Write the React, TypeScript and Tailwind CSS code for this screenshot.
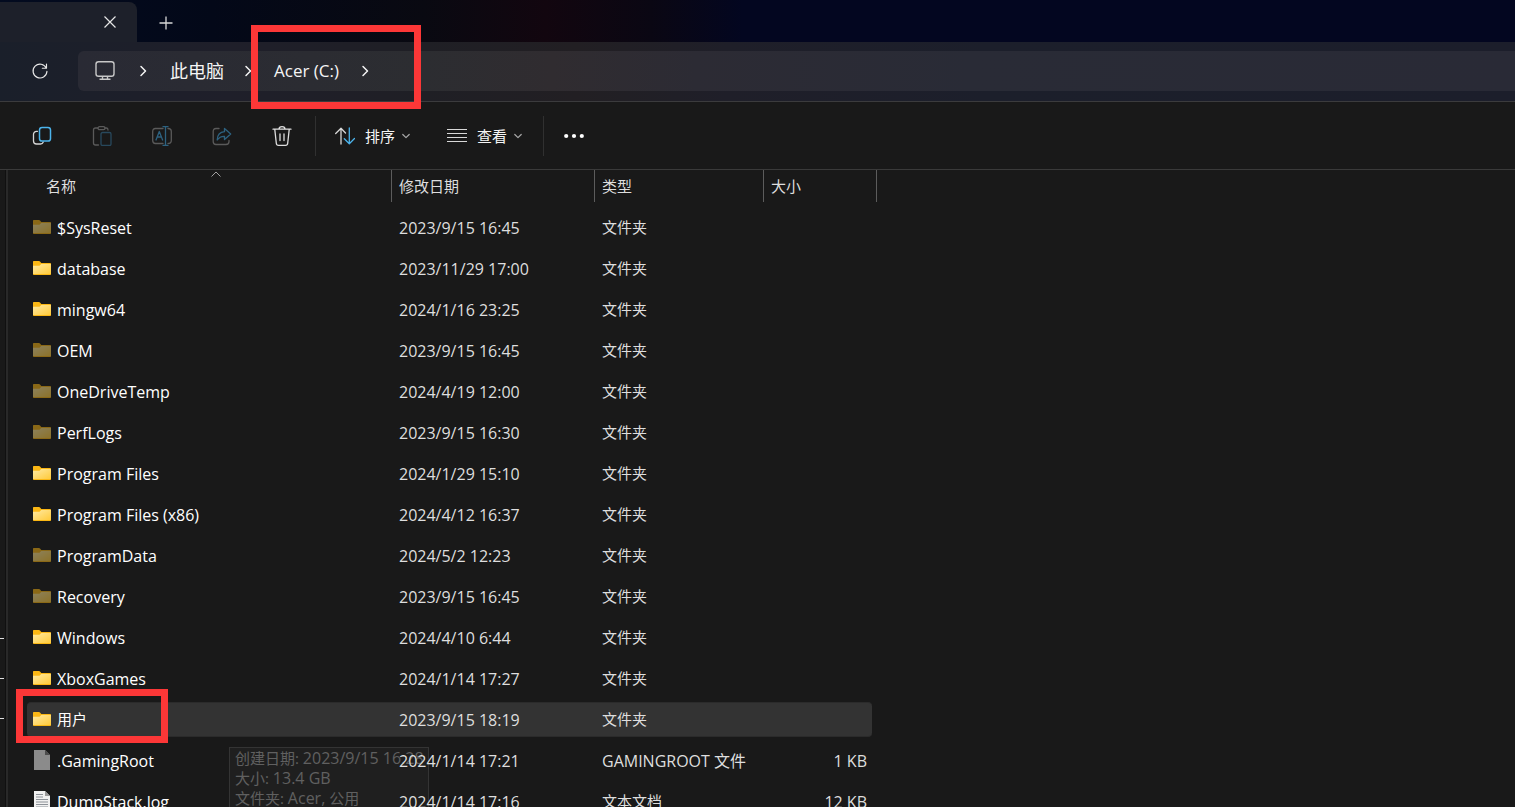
import type { ReactNode } from "react";

type Kind = "folder" | "hidden" | "file" | "text";

const entries: { name: string; date: string; type: string; size?: string; kind: Kind }[] = [
  { name: "$SysReset", date: "2023/9/15 16:45", type: "文件夹", kind: "hidden" },
  { name: "database", date: "2023/11/29 17:00", type: "文件夹", kind: "folder" },
  { name: "mingw64", date: "2024/1/16 23:25", type: "文件夹", kind: "folder" },
  { name: "OEM", date: "2023/9/15 16:45", type: "文件夹", kind: "hidden" },
  { name: "OneDriveTemp", date: "2024/4/19 12:00", type: "文件夹", kind: "hidden" },
  { name: "PerfLogs", date: "2023/9/15 16:30", type: "文件夹", kind: "hidden" },
  { name: "Program Files", date: "2024/1/29 15:10", type: "文件夹", kind: "folder" },
  { name: "Program Files (x86)", date: "2024/4/12 16:37", type: "文件夹", kind: "folder" },
  { name: "ProgramData", date: "2024/5/2 12:23", type: "文件夹", kind: "hidden" },
  { name: "Recovery", date: "2023/9/15 16:45", type: "文件夹", kind: "hidden" },
  { name: "Windows", date: "2024/4/10 6:44", type: "文件夹", kind: "folder" },
  { name: "XboxGames", date: "2024/1/14 17:27", type: "文件夹", kind: "folder" },
  { name: "用户", date: "2023/9/15 18:19", type: "文件夹", kind: "folder" },
  { name: ".GamingRoot", date: "2024/1/14 17:21", type: "GAMINGROOT 文件", size: "1 KB", kind: "file" },
  { name: "DumpStack.log", date: "2024/1/14 17:16", type: "文本文档", size: "12 KB", kind: "text" },
];

const columns = [
  { label: "名称", pad: "pl-[19px]" },
  { label: "修改日期", pad: "pl-[7px]" },
  { label: "类型", pad: "pl-[7px]" },
  { label: "大小", pad: "pl-[7px]" },
];

// Latin glyphs run a size larger than the Chinese ones
const textSize = (text: string) => (/[A-Za-z0-9]/.test(text) ? "text-[16px]" : "text-[15px]");

function Icon({ children, className = "size-5" }: { children: ReactNode; className?: string }) {
  return (
    <svg viewBox="0 0 20 20" className={className} fill="none" stroke="currentColor" strokeWidth="1.3" strokeLinecap="round" strokeLinejoin="round" aria-hidden="true">
      {children}
    </svg>
  );
}

function Chevron({ className = "size-3" }: { className?: string }) {
  return (
    <svg viewBox="0 0 12 12" className={className} fill="none" stroke="currentColor" strokeWidth="1.5" strokeLinecap="round" strokeLinejoin="round" aria-hidden="true">
      <path d="M4 1.5 8.5 6 4 10.5" />
    </svg>
  );
}

function DownChevron() {
  return (
    <svg viewBox="0 0 8 8" className="size-2 text-[#a8a8a8]" fill="none" stroke="currentColor" strokeWidth="1.2" strokeLinecap="round" strokeLinejoin="round" aria-hidden="true">
      <path d="M.8 2.5 4 5.7 7.2 2.5" />
    </svg>
  );
}

function EntryIcon({ kind }: { kind: Kind }) {
  if (kind === "file" || kind === "text") {
    return (
      <svg viewBox="0 0 18 20" className="mb-0.5 h-5 w-[18px] shrink-0" aria-hidden="true">
        <path d="M1 0H12L17 5V20H1Z" fill={kind === "file" ? "#8b8b8b" : "#f1f1f1"} />
        <path d="M12 0 17 5H12Z" fill={kind === "file" ? "#4d4d4d" : "#9a9a9a"} />
        {kind === "text" && <path d="M3 3.5H10M3 6H10M3 8.5H15M3 11H15M3 13.5H15M3 16H15" stroke="#8d9298" strokeWidth="1" />}
      </svg>
    );
  }
  return (
    <svg viewBox="0 0 18 14" className={kind === "hidden" ? "mb-0.5 h-3.5 w-[18px] shrink-0 opacity-50" : "mb-0.5 h-3.5 w-[18px] shrink-0"} aria-hidden="true">
      <defs>
        <linearGradient id="folder" x1="0" y1="0" x2="1" y2="1">
          <stop offset="0" stopColor="#ffeaa3" />
          <stop offset="1" stopColor="#ffca3a" />
        </linearGradient>
      </defs>
      <path d="M0 .7Q0 0 .7 0H6Q6.6 0 7 .5L8.300 2H17.300Q18 2 18 2.700V13.300Q18 14 17.300 14H.7Q0 14 0 13.300Z" fill="#fbb714" />
      <path d="M0 4.700H6.500L8.300 3H18V13H0Z" fill="url(#folder)" />
    </svg>
  );
}

function ToolButton({ label, children, disabled = false }: { label: string; children: ReactNode; disabled?: boolean }) {
  return (
    <button type="button" aria-label={label} disabled={disabled} className="flex h-10 w-15 items-center justify-center">
      {children}
    </button>
  );
}

function TitleBar() {
  return (
    <div className="flex h-[42px] items-end bg-[linear-gradient(90deg,#030b20_0%,#030818_14%,#090911_28%,#12060f_36%,#0a0713_43%,#030620_49%,#030620_100%)]">
      <div className="flex h-10 w-[137px] items-center justify-end rounded-tr-lg bg-[#1d202a] pr-5">
        <button type="button" aria-label="关闭标签页" className="text-[#e6e6e6]">
          <svg viewBox="0 0 14 14" className="size-3.5" fill="none" stroke="currentColor" strokeWidth="1.2" aria-hidden="true">
            <path d="M1.500 1.500 12.500 12.500M12.500 1.500 1.500 12.500" />
          </svg>
        </button>
      </div>
      <button type="button" aria-label="新建标签页" className="flex h-10 w-[58px] items-center justify-center pt-0.5 text-[#d8d8d8]">
        <svg viewBox="0 0 14 14" className="size-3.5" fill="none" stroke="currentColor" strokeWidth="1.3" aria-hidden="true">
          <path d="M7 .5V13.500M.5 7H13.500" />
        </svg>
      </button>
    </div>
  );
}

function AddressBar() {
  return (
    <div className="flex h-15 items-start border-b border-[#3b3b3d] bg-[linear-gradient(90deg,#1a1f2a_0%,#1f1f2a_15%,#1f1f25_28%,#221f23_38%,#1f1f29_48%,#1c1f2b_65%,#1c1e2b_100%)] pt-[9px]">
      <button type="button" aria-label="刷新" className="ml-5 flex size-10 items-center justify-center text-[#e8e8e8]">
        <Icon className="size-[18px]">
          <path d="M17 6.800A7.700 7.700 0 1 0 17.700 10.500M17.200 2.400V6.900H12.600" />
        </Icon>
      </button>
      <nav aria-label="路径" className="ml-[18px] flex h-10 flex-1 items-center rounded-l-md bg-[linear-gradient(90deg,#292a34_0%,#2c2d31_24%,#302c30_33%,#2c2b34_43%,#292b36_62%,#292a36_100%)] pl-4 text-lg text-[#f5f5f5]">
        <svg viewBox="0 0 22 22" className="size-[22px] text-[#c8c8c8]" fill="none" stroke="currentColor" strokeWidth="1.4" aria-hidden="true">
          <rect x="2" y="1.700" width="18" height="14.600" rx="2.600" />
          <path d="M8.500 16.500V19M13.500 16.500V19M5.500 19.300H16.500" />
        </svg>
        <Chevron className="ml-[21px] size-3" />
        <a href="#this-pc" className="ml-[21px] w-[54px] whitespace-nowrap">此电脑</a>
        <Chevron className="ml-[18px] size-3" />
        <div className="relative ml-5 flex items-center">
          <a href="#c" className="w-[65px] whitespace-nowrap text-[17px]">Acer (C:)</a>
          <Chevron className="ml-5 size-3" />
          <div className="pointer-events-none absolute -left-[23px] top-1/2 h-[84px] w-[170px] -translate-y-[46px] border-[7px] border-[#fc3737]" />
        </div>
      </nav>
    </div>
  );
}

function Toolbar() {
  return (
    <div className="flex h-[68px] items-center border-b border-[#3a3a3a] pl-3 text-[15px] text-[#f5f5f5]">
      <ToolButton label="复制">
        <Icon>
          <path d="M5.500 5.300H4.500A3 3 0 0 0 1.500 8.300V15A3 3 0 0 0 4.500 18H8.500A3 3 0 0 0 11.300 16" stroke="#d5d5d5" />
          <rect x="7.500" y="1.500" width="11" height="13.500" rx="2.600" stroke="#4cb4ec" strokeWidth="1.500" />
        </Icon>
      </ToolButton>
      <ToolButton label="粘贴" disabled>
        <Icon>
          <path d="M6 2H3.500Q1.500 2 1.500 4V17Q1.500 19 3.500 19H6.500M13 2H14.500Q16 2 16 4" stroke="#5a5a5a" />
          <rect x="6" y=".7" width="7" height="3" rx="1.500" stroke="#5a5a5a" />
          <rect x="9" y="6.500" width="10" height="13" rx="1.500" stroke="#28495d" />
        </Icon>
      </ToolButton>
      <ToolButton label="重命名" disabled>
        <Icon>
          <path d="M11 2.500H3.500Q.7 2.500 .7 5.500V14.500Q.7 17.500 3.500 17.500H11M16 2.500Q19.300 2.500 19.300 5.500V14.500Q19.300 17.500 16 17.500" stroke="#5a5a5a" />
          <path d="M4 14 7.300 5.500 10.600 14M5.200 11H9.400M13.500 .7V19.300M11 .7H16M11 19.300H16" stroke="#2d6280" />
        </Icon>
      </ToolButton>
      <ToolButton label="共享" disabled>
        <Icon>
          <path d="M7 2.500H4Q1.200 2.500 1.200 5.500V15.500Q1.200 18.500 4 18.500H14Q17 18.500 17 15.500V14.500" stroke="#5a5a5a" />
          <path d="M12.500 2.500 18.700 8 12.500 13.500V10.300Q8 10 5.200 14Q5.500 6.200 12.500 5.700Z" stroke="#2d6280" />
        </Icon>
      </ToolButton>
      <ToolButton label="删除">
        <Icon className="size-5 text-[#dedede]">
          <path d="M1 3.200H19M7 3Q7 .7 10 .7T13 3M2.800 3.500 4.300 17.200Q4.500 19.300 6.500 19.300H13.500Q15.500 19.300 15.700 17.200L17.200 3.500M8 8V14.500M12 8V14.500" />
        </Icon>
      </ToolButton>
      <div className="ml-[3px] h-10 w-px bg-[#303030]" />
      <button type="button" className="ml-[19px] flex h-10 items-center pt-px">
        <Icon>
          <path d="M6 18V2.300M.7 7.500 6 2.300 10.500 7" stroke="#d8d8d8" />
          <path d="M14.300 2V17.700M9.300 12.700 14.300 17.700 19.500 12.500" stroke="#4cb4ec" />
        </Icon>
        <span className="ml-2.5 mr-[7px]">排序</span>
        <DownChevron />
      </button>
      <button type="button" className="ml-[37px] flex h-10 items-center pt-px">
        <Icon>
          <path d="M0 3.500H20M0 7.500H20M0 11.500H20M0 15.500H20" stroke="#d8d8d8" strokeLinecap="butt" strokeWidth="1.200" />
        </Icon>
        <span className="ml-2.5 mr-[7px]">查看</span>
        <DownChevron />
      </button>
      <div className="ml-[21px] h-10 w-px bg-[#303030]" />
      <ToolButton label="更多">
        <Icon>
          <g fill="#fff" stroke="none">
            <circle cx="2.200" cy="10" r="2.100" />
            <circle cx="10" cy="10" r="2.100" />
            <circle cx="17.800" cy="10" r="2.100" />
          </g>
        </Icon>
      </ToolButton>
    </div>
  );
}

function FolderTip() {
  return (
    <div role="tooltip" className="absolute left-[202px] top-11 -z-10 h-[88px] w-[200px] whitespace-nowrap border border-[#343434] bg-[#1f1f1f] pl-[5px] text-[15px] leading-5 text-[#606060]">
      <p className="h-5">创建日期: <span className="text-[16px]">2023/9/15 16:28</span></p>
      <p className="h-5">大小: <span className="text-[16px]">13.4 GB</span></p>
      <p className="h-5">文件夹: <span className="text-[16px]">Acer,</span> 公用</p>
    </div>
  );
}

function FileTable() {
  return (
    <table className="ml-[19px] w-[850px] table-fixed border-collapse self-start text-left text-[15px]">
      <colgroup>
        <col className="w-[365px]" />
        <col className="w-[203px]" />
        <col className="w-[169px]" />
        <col className="w-[113px]" />
      </colgroup>
      <thead>
        <tr className="h-[37px] align-top text-[#dedede]">
          {columns.map(({ label, pad }, i) => (
            <th key={label} className="p-0 font-normal">
              <div className={`relative flex h-8 items-center border-r border-[#5c5c5c] ${pad}`}>
                {label}
                {i === 0 && (
                  <svg viewBox="0 0 10 6" className="absolute left-[184px] top-px h-1.5 w-2.5" fill="none" stroke="#a0a0a0" aria-hidden="true">
                    <path d="M.5 5.500 5 1 9.500 5.500" />
                  </svg>
                )}
              </div>
            </th>
          ))}
        </tr>
      </thead>
      <tbody>
        {entries.map(({ name, date, type, size, kind }) => {
          const active = name === "用户";
          const cell = active ? "flex h-[35px] items-center border-y border-[#2b2b2b] bg-[#333333]" : "flex h-[35px] items-center";
          return (
            <tr key={name} className="h-[41px] text-[#dedede]">
              <td className="p-0">
                <div className={`relative gap-1.5 rounded-l-sm pl-1.5 text-white ${cell}`}>
                  <EntryIcon kind={kind} />
                  <span className={textSize(name)}>{name}</span>
                  {active && <FolderTip />}
                  {active && <div className="pointer-events-none absolute -left-[11px] -top-3.5 h-[54px] w-[152px] border-[7px] border-[#fc3737]" />}
                </div>
              </td>
              <td className="p-0"><div className={`pl-[7px] text-[16px] ${cell}`}>{date}</div></td>
              <td className="p-0"><div className={`pl-[7px] ${textSize(type)} ${cell}`}>{type}</div></td>
              <td className="p-0"><div className={`mr-[5px] justify-end rounded-r-sm pr-[5px] text-[16px] ${cell}`}>{size}</div></td>
            </tr>
          );
        })}
      </tbody>
    </table>
  );
}

export default function App() {
  return (
    <div className="flex h-screen flex-col overflow-hidden bg-[#191919] font-['Open_Sans','Noto_Sans_CJK_SC',sans-serif]">
      <TitleBar />
      <AddressBar />
      <Toolbar />
      <main className="isolate flex min-h-0 flex-1">
        {/* Edge of the collapsed navigation tree */}
        <div className="flex w-[5px] flex-col gap-[39px] pt-[468px]">
          <div className="h-px w-1 shrink-0 bg-[#e0e0e0]" />
          <div className="h-px w-1 shrink-0 bg-[#e0e0e0]" />
          <div className="h-px w-1 shrink-0 bg-[#e0e0e0]" />
        </div>
        <div className="w-[3px] border-l border-[#101010] bg-[#292929]" />
        <FileTable />
      </main>
    </div>
  );
}
